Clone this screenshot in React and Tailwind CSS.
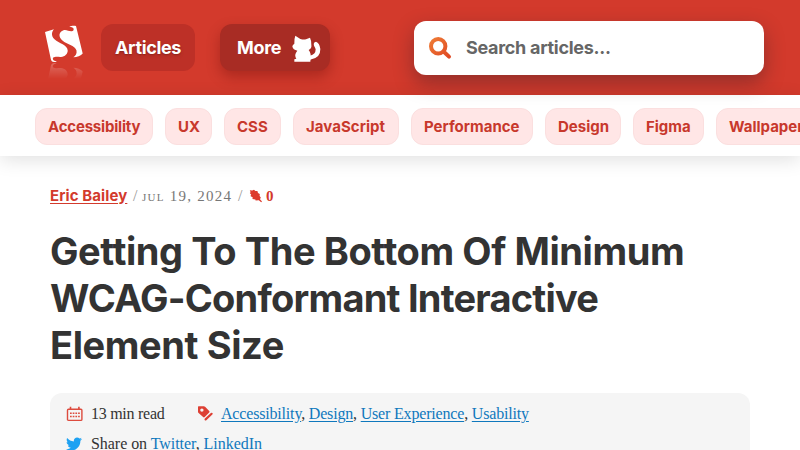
import React from "react";
import { FaTwitter } from "react-icons/fa";

const TOPICS = [
  { name: "Accessibility", className: "w-[118px] tracking-[-0.2px]" },
  { name: "UX", className: "w-[47px]" },
  { name: "CSS", className: "w-[57px]" },
  { name: "JavaScript", className: "w-[106px] tracking-[0.05px]" },
  { name: "Performance", className: "w-[122px]" },
  { name: "Design", className: "w-[76px]" },
  { name: "Figma", className: "w-[71px]" },
  { name: "Wallpapers", className: "w-[110px]" },
];

const TAGS = ["Accessibility", "Design", "User Experience", "Usability"];

const LogoShape = () => (
  <>
    <path d="M10 4.3 L1 7 L6.7 33.5 C7 37 10 38 13 36.2 C9.5 36.5 8.5 34.5 9 32.8 C12 31 14 32.2 17 32 C21 31.7 23.8 28.8 23.7 25.5 C23.5 20 15 18.5 10.5 14.3 C7 11 7.5 7 10 4.3 Z" />
    <path d="M25.3 1.7 C27 0.8 30 0.3 32 1 L38.7 28.5 C37 30.8 33 32.3 29.3 32.3 C31.8 31 33 28.5 32.5 25.5 C31 20.5 22.5 19 18.7 15.7 C14 12 14.8 7 19 5.4 C22.5 4.2 24.5 6.6 27.7 6.3 C30.8 5.7 30.5 1.7 25.3 1.7 Z" />
  </>
);

const Logo = () => (
  <svg width="40" height="60" viewBox="0 0 40 60" fill="white">
    <defs>
      <linearGradient id="fade" x1="0" y1="36" x2="0" y2="54" gradientUnits="userSpaceOnUse">
        <stop offset="0" stopColor="white" stopOpacity="0.28" />
        <stop offset="1" stopColor="white" stopOpacity="0" />
      </linearGradient>
      <mask id="reflection">
        <rect y="38" width="40" height="20" fill="url(#fade)" />
      </mask>
    </defs>
    <LogoShape />
    <g mask="url(#reflection)">
      <g transform="translate(0 75) scale(1 -1)">
        <LogoShape />
      </g>
    </g>
  </svg>
);

const Cat = () => (
  <svg width="40" height="38" viewBox="0 0 120 114" fill="white">
    <path d="M31 20 L46 30 Q56 33 63 31 L75 26 Q80 36 79 48 Q81 58 71 63 Q79 73 77 88 L76 98 H28 V91 L34 89 Q28 79 33 71 L37 65 Q24 63 22 52 Q23 48 28 44 Q27 30 31 20 Z" />
    <path d="M75 92 V80 Q92 77 92 61 Q91 56 87 50 Q84 40 93 38 Q104 42 106 60 Q107 88 75 92 Z" />
  </svg>
);

const SearchIcon = () => (
  <svg width="24" height="24" viewBox="0 0 24 24" fill="none" strokeLinecap="round">
    <defs>
      <linearGradient id="flame" x1="0" y1="0" x2="1" y2="1">
        <stop offset="0" stopColor="#ee7a35" />
        <stop offset="1" stopColor="#e04a24" />
      </linearGradient>
    </defs>
    <path
      d="M17.4 10.2 A7.2 7.2 0 1 0 3 10.2 A7.2 7.2 0 1 0 17.4 10.2 M15.8 15.8 L21 20.6"
      stroke="url(#flame)"
      strokeWidth="4"
    />
  </svg>
);

const LeafIcon = () => (
  <svg width="14" height="14" viewBox="0 0 14 14" fill="#dd3a2c">
    <path d="M0.8 1.2 L3.2 1.6 L5 0.8 L6.4 2 L8.4 2 L9 4 L10.8 5 L10.6 7 L11.8 8.6 L11 10.2 L13 12.4 L12.2 13.2 L9.8 11.2 L6.6 11.6 L6.4 10.4 L3.4 10 L3.8 8.4 L1.4 7 L2.2 5.8 L0.8 4 L1.6 3.2 Z" />
  </svg>
);

const CalendarIcon = () => (
  <svg width="18" height="16" viewBox="0 0 18 16" fill="none" stroke="#dd4b3e">
    <rect x="1.5" y="3.2" width="14.4" height="11.2" rx="1" strokeWidth="1.4" />
    <path d="M4.5 0.8 V4 M12.9 0.8 V4" strokeWidth="1.6" />
    <path d="M4 7.3 H14 M4 10.5 H14" strokeWidth="1.6" strokeDasharray="1.7 1" />
  </svg>
);

const TagIcon = () => (
  <svg width="18" height="18" viewBox="0 0 18 18">
    <path
      fillRule="evenodd"
      fill="#dd4034"
      d="M2.6 1.2 H7.8 Q8.5 1.2 9.1 1.8 L13.2 6 Q14 6.8 13.2 7.6 L8.7 12 Q7.9 12.8 7.1 12 L2.6 8 Q2 7.5 2 6.8 V1.8 Q2 1.2 2.6 1.2 Z M5.9 3.4 A1.7 1.7 0 1 0 5.9 6.8 A1.7 1.7 0 1 0 5.9 3.4 Z"
    />
    <path d="M9.6 14.4 L15.6 8.8" stroke="#dd4034" strokeWidth="2.2" strokeLinecap="round" />
  </svg>
);

const Header = () => (
  <header className="flex h-[95px] items-start bg-[#d33a2c] pl-11 text-lg font-bold text-white">
    <a className="mt-[25px] w-10 shrink-0">
      <Logo />
    </a>
    <a className="mt-6 ml-[17px] flex h-[47px] w-[94px] items-center justify-center rounded-xl bg-[#bd3027] tracking-[-0.35px] text-shadow-md">
      Articles
    </a>
    <a className="mt-6 ml-[25px] flex h-[47px] w-[110px] items-center rounded-xl bg-[#a82c24] pl-[17px] tracking-[-0.3px] shadow-[0_6px_14px_rgba(80,0,0,0.3)]">
      <span className="w-12">More</span>
      <Cat />
    </a>
    <div className="mt-[21px] ml-[84px] flex h-[54px] w-[350px] items-center rounded-xl bg-white pl-[14px] tracking-[-0.3px] text-[#666] shadow-[0_8px_20px_rgba(50,30,40,0.4)]">
      <span className="w-[38px]">
        <SearchIcon />
      </span>
      <span>Search articles...</span>
    </div>
  </header>
);

const TopicNav = () => (
  <nav className="flex h-[61px] gap-3 pt-[13px] pl-[35px] shadow-[0_4px_18px_rgba(0,0,0,0.12)]">
    {TOPICS.map((topic) => (
      <a
        key={topic.name}
        className={`flex h-[37px] shrink-0 items-center rounded-xl border border-[#fbdfdf] bg-[#ffe6e6] pt-0.5 pl-3 text-[15px] font-bold text-[#c8382c] ${topic.className}`}
      >
        {topic.name}
      </a>
    ))}
  </nav>
);

const ArticleMeta = () => (
  <div className="flex h-6 items-center font-['Liberation_Serif',serif] text-base text-[#777]">
    <a className="w-[77px] font-['Inter',sans-serif] text-[15px] font-bold tracking-[0.1px] whitespace-nowrap text-[#d33a2c] underline underline-offset-2">
      Eric Bailey
    </a>
    <span className="w-[15px] pl-[6px] text-[#999]">/</span>
    <span className="w-[96px] text-[15px] tracking-[1.25px] whitespace-nowrap">
      <span className="text-[11px]">JUL</span> 19, 2024
    </span>
    <span className="w-[11px] text-[#999]">/</span>
    <LeafIcon />
    <span className="pl-[3px] text-[15px] font-bold text-[#d33a2c]">0</span>
  </div>
);

const ArticleInfo = () => (
  <div className="mt-6 h-24 w-[700px] rounded-xl bg-[#f5f5f5] pt-[5px] pl-4 font-['Liberation_Serif',serif] text-base text-[#333]">
    <div className="flex h-[31px] items-center">
      <span className="w-[25px]">
        <CalendarIcon />
      </span>
      <span className="w-[105px] tracking-[-0.27px]">13 min read</span>
      <span className="w-[25px]">
        <TagIcon />
      </span>
      <span className="tracking-[-0.18px]">
        {TAGS.map((tag, i) => (
          <React.Fragment key={tag}>
            {i > 0 && ", "}
            <a className="text-[#0f78bd] underline underline-offset-2">{tag}</a>
          </React.Fragment>
        ))}
      </span>
    </div>
    <div className="flex h-[30px] items-center">
      <span className="w-[25px]">
        <FaTwitter size={16} color="#1da1f2" />
      </span>
      <span className="tracking-[-0.05px]">
        Share on <a className="text-[#0f78bd]">Twitter</a>,{" "}
        <a className="text-[#0f78bd]">LinkedIn</a>
      </span>
    </div>
  </div>
);

export default function App() {
  return (
    <div className="h-[450px] overflow-hidden bg-white font-['Inter',sans-serif]">
      <Header />
      <TopicNav />
      <main className="pt-7 pl-[50px]">
        <ArticleMeta />
        <h1 className="mt-5 text-[38px] leading-[47px] font-bold text-[#333]">
          <span className="block tracking-[-0.42px]">Getting To The Bottom Of Minimum</span>
          <span className="block tracking-[-0.78px]">WCAG-Conformant Interactive</span>
          <span className="block tracking-[-0.4px]">Element Size</span>
        </h1>
        <ArticleInfo />
      </main>
    </div>
  );
}
